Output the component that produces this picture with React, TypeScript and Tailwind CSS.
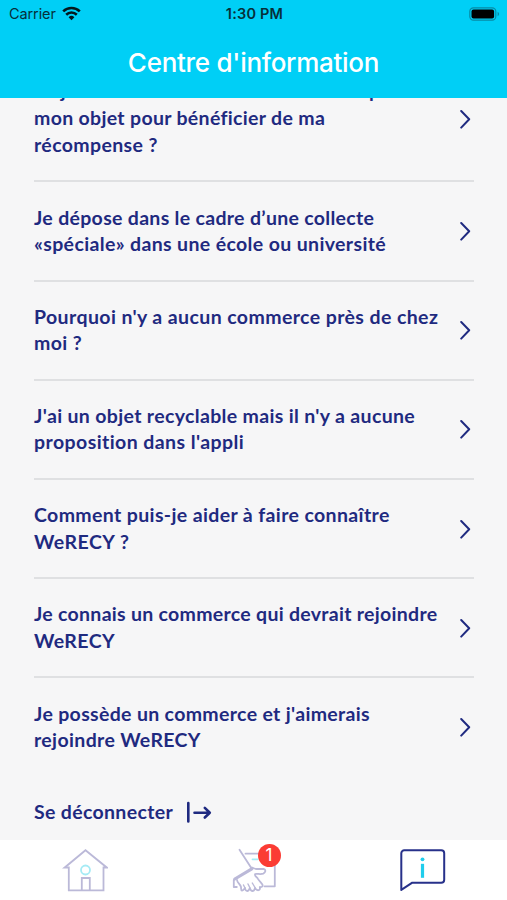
const questions = [
    [
        { text: "Ai-je un délai ou bien une date limite pour", spacing: "-mt-[1.6px] mb-[1.6px] tracking-[0.35px]" },
        { text: "mon objet pour bénéficier de ma", spacing: "tracking-[0.32px]" },
        { text: "récompense ?", spacing: "tracking-[0.37px]" },
    ],
    [
        { text: "Je dépose dans le cadre d’une collecte", spacing: "tracking-[0.31px]" },
        { text: "«spéciale» dans une école ou université", spacing: "tracking-[0.36px]" },
    ],
    [
        { text: "Pourquoi n'y a aucun commerce près de chez", spacing: "tracking-[0.4px]" },
        { text: "moi ?", spacing: "tracking-[0.4px]" },
    ],
    [
        { text: "J'ai un objet recyclable mais il n'y a aucune", spacing: "tracking-[0.34px]" },
        { text: "proposition dans l'appli", spacing: "tracking-[0.42px]" },
    ],
    [
        { text: "Comment puis-je aider à faire connaître", spacing: "tracking-[0.37px]" },
        { text: "WeRECY ?", spacing: "tracking-[0.5px]" },
    ],
    [
        { text: "Je connais un commerce qui devrait rejoindre", spacing: "tracking-[0.29px]" },
        { text: "WeRECY", spacing: "tracking-[0.45px]" },
    ],
    [
        { text: "Je possède un commerce et j'aimerais", spacing: "tracking-[0.33px]" },
        { text: "rejoindre WeRECY", spacing: "tracking-[0.36px]" },
    ],
];

function StatusBar() {
    return (
        <div className="grid h-[27px] grid-cols-3 items-center pl-[9px] pr-[7px] text-[14.5px] text-[#06303a]">
            <div className="flex items-center gap-[6px]">
                <span className="tracking-[-0.1px]">Carrier</span>
                <svg width="19" height="15" viewBox="0 0 19 15" fill="none" stroke="#03181d" strokeWidth="2.600">
                    <path d="M1.200 5.400a12 12 0 0 1 16.600 0M4.200 8.700a7.600 7.600 0 0 1 10.600 0" />
                    <path d="M6.600 11.200a4.200 4.200 0 0 1 5.800 0L9.500 14.200z" fill="#03181d" stroke="none" />
                </svg>
            </div>
            <span className="text-center font-semibold tracking-[0.2px]">1:30 PM</span>
            <svg className="justify-self-end" width="31" height="14" viewBox="0 0 31 14" fill="none">
                <rect x="0.8" y="0.8" width="26" height="12.4" rx="3.6" stroke="#078ba5" strokeWidth="1.2" />
                <rect x="2.5" y="2.5" width="22.6" height="9" rx="2" fill="#000" />
                <path d="M28.6 4.8c2 .8 2 3.6 0 4.4z" fill="#078ba5" />
            </svg>
        </div>
    );
}

function Chevron() {
    return (
        <svg className="shrink-0" width="12" height="20" viewBox="0 0 12 20" fill="none" stroke="#1f2a80" strokeWidth="2" strokeLinecap="round" strokeLinejoin="round">
            <path d="M2.200 2 10.200 10.300 2.200 18.600" />
        </svg>
    );
}

function TabBar() {
    return (
        <nav className="grid h-[60px] shrink-0 grid-cols-3 bg-white">
            <button type="button" className="flex justify-center pt-[8px]" aria-label="Accueil">
                <svg width="46" height="46" viewBox="0 0 46 46" fill="none" stroke="#bbb9d8" strokeWidth="1.800">
                    <path d="M6.800 19.700H2.500L23.500 2.200 45 19.700h-3.500V42.300H6.800V18.500M41.500 18.500v2M19.800 42.300V30h8v12.300" />
                    <circle cx="23.500" cy="22" r="4.500" stroke="#a5ebf5" />
                </svg>
            </button>
            <button type="button" className="flex justify-center pt-[4px]" aria-label="Dons">
                <div className="relative">
                    <svg width="48" height="50" viewBox="0 0 48 50" fill="none" stroke="#bbb9d8" strokeWidth="1.800" strokeLinejoin="round" strokeLinecap="round">
                        <path d="M15.500 9.700h29.300v32.600H34.500" />
                        <path d="M22.500 15.300h5" stroke="#a5ebf5" />
                        <path d="M9.500 5.700l12.300 19" />
                        <path d="M21.800 24.800L4.800 35" strokeWidth="3.200" />
                        <path d="M3.800 36V43h3" />
                        <path d="M7 36c.3 3 3.500 4 4 7 .2 1.800-.2 3.300 1 3.500 1.500.2 2-1.200 3-2.500.2 1.700.7 3 2.300 3s2-1.500 2.500-3c.5 1.700 1 3 2.700 3s2-1.500 2.500-3c1 1.500 2 2.500 3.500 2.200s1.700-2 1.300-3.200c2 .4 3.200-.6 2.700-2.200s-3.500-4-4.500-6c-.8-2-4-2.500-2.800-4.800 1.800-.8 4.800.8 8-.4 2.500-1.200 3-4 .5-4.600h-7c-2.200 0-3.500-.9-4.700-1.500" />
                        <path d="M15 44l-1.500-3M20 44l-2-4M25.300 44l-3-5" strokeWidth="1.400" />
                    </svg>
                    <span className="absolute left-[28px] top-0 flex h-[23px] w-[23px] items-center justify-center rounded-full bg-[#fb3c34] text-[17px] leading-none text-white">1</span>
                </div>
            </button>
            <button type="button" className="flex justify-center pt-[9px]" aria-label="Information">
                <svg width="46" height="44" viewBox="0 0 46 44" fill="none">
                    <path d="M1.300 40.900V4.300a3 3 0 0 1 3-3h36.900a3 3 0 0 1 3 3V30.700a3 3 0 0 1-3 3H12.300z" stroke="#27318a" strokeWidth="2" strokeLinejoin="round" />
                    <circle cx="22.500" cy="10.300" r="1.900" fill="#20cdec" />
                    <path d="M22.500 14.800v14" stroke="#20cdec" strokeWidth="3.200" />
                </svg>
            </button>
        </nav>
    );
}

export default function App() {
    return (
        <div className="flex h-[900px] w-[507px] flex-col overflow-hidden bg-[#f6f6f7] font-['Inter',sans-serif]">
            <header className="h-[98px] shrink-0 bg-[#00cff6]">
                <StatusBar />
                <h1 className="pt-[15.5px] text-center text-[26px] font-medium leading-10 tracking-[-0.28px] text-white">Centre d'information</h1>
            </header>
            <main className="flex min-h-0 flex-1 flex-col justify-end overflow-hidden pl-[34px] pr-[33px] font-['Lato',sans-serif] text-[19.5px] font-bold leading-[26.3px] text-[#1f2a80]">
                <ul className="shrink-0 divide-y-2 divide-[#dfe0e2]">
                    {questions.map((lines) => (
                        <li key={lines[0].text} className="flex items-center justify-between pb-[22.3px] pt-[22.3px] pr-[3px]">
                            <div>
                                {lines.map((line) => (
                                    <p key={line.text} className={`whitespace-nowrap ${line.spacing}`}>{line.text}</p>
                                ))}
                            </div>
                            <Chevron />
                        </li>
                    ))}
                </ul>
                <button type="button" className="flex h-[64.5px] shrink-0 items-center gap-[13px] pt-[8px]">
                    <span className="tracking-[0.33px]">Se déconnecter</span>
                    <svg width="26" height="22" viewBox="0 0 26 22" fill="none" stroke="#1f2a80" strokeWidth="2.600" strokeLinecap="round" strokeLinejoin="round">
                        <path d="M2.300 2v18.500M8.500 11.700H23.300M18.800 6.900l5 4.800-5 4.800" />
                    </svg>
                </button>
            </main>
            <TabBar />
        </div>
    );
}
